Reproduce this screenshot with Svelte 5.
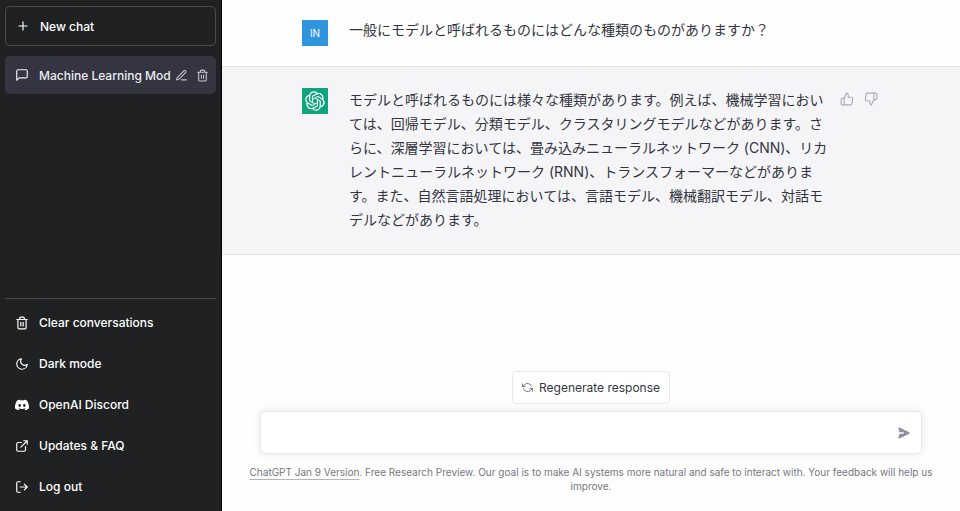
<script>
    let message = '';

    const links = [
        { icon: 'trash', label: 'Clear conversations' },
        { icon: 'moon', label: 'Dark mode' },
        { icon: 'discord', label: 'OpenAI Discord', href: '#discord' },
        { icon: 'external', label: 'Updates & FAQ', href: '#faq' },
        { icon: 'logout', label: 'Log out' }
    ];

    // Feather icon paths, 24x24 grid
    const icons = {
        plus: 'M12 5v14M5 12h14',
        chat: 'M21 15a2 2 0 0 1-2 2H7l-4 4V5a2 2 0 0 1 2-2h14a2 2 0 0 1 2 2z',
        edit: 'M12 20h9M16.5 3.5a2.121 2.121 0 0 1 3 3L7 19l-4 1 1-4L16.5 3.5z',
        trash: 'M3 6h18M19 6v14a2 2 0 0 1-2 2H7a2 2 0 0 1-2-2V6m3 0V4a2 2 0 0 1 2-2h4a2 2 0 0 1 2 2v2M10 11v6M14 11v6',
        moon: 'M21 12.79A9 9 0 1 1 11.21 3 7 7 0 0 0 21 12.79z',
        external: 'M18 13v6a2 2 0 0 1-2 2H5a2 2 0 0 1-2-2V8a2 2 0 0 1 2-2h6M15 3h6v6M10 14L21 3',
        logout: 'M9 21H5a2 2 0 0 1-2-2V5a2 2 0 0 1 2-2h4M16 17l5-5-5-5M21 12H9',
        up: 'M14 9V5a3 3 0 0 0-3-3l-4 9v11h11.28a2 2 0 0 0 2-1.7l1.38-9a2 2 0 0 0-2-2.3zM7 22H4a2 2 0 0 1-2-2v-7a2 2 0 0 1 2-2h3',
        down: 'M10 15v4a3 3 0 0 0 3 3l4-9V2H5.72a2 2 0 0 0-2 1.7l-1.38 9a2 2 0 0 0 2 2.3zm7-13h2.67A2.31 2.31 0 0 1 22 4v7a2.31 2.31 0 0 1-2.33 2H17',
        refresh: 'M1 4v6h6M23 20v-6h-6M20.49 9A9 9 0 0 0 5.64 5.64L1 10M23 14l-4.64 4.36A9 9 0 0 1 3.51 15'
    };

    const discord = 'M20.317 4.37a19.79 19.79 0 0 0-4.885-1.515.074.074 0 0 0-.079.037c-.21.375-.444.864-.608 1.25a18.27 18.27 0 0 0-5.487 0 12.64 12.64 0 0 0-.617-1.25.077.077 0 0 0-.079-.037A19.736 19.736 0 0 0 3.677 4.37a.07.07 0 0 0-.032.027C.533 9.046-.32 13.58.099 18.057a.082.082 0 0 0 .031.057 19.9 19.9 0 0 0 5.993 3.03.078.078 0 0 0 .084-.028c.462-.63.874-1.295 1.226-1.994a.076.076 0 0 0-.041-.106 13.107 13.107 0 0 1-1.872-.892.077.077 0 0 1-.008-.128c.126-.094.252-.192.372-.291a.074.074 0 0 1 .077-.01c3.928 1.793 8.18 1.793 12.062 0a.074.074 0 0 1 .078.009c.12.099.246.198.373.292a.077.077 0 0 1-.006.127 12.3 12.3 0 0 1-1.873.892.077.077 0 0 0-.041.107c.36.698.772 1.362 1.225 1.993a.076.076 0 0 0 .084.028 19.839 19.839 0 0 0 6.002-3.03.077.077 0 0 0 .032-.054c.5-5.177-.838-9.674-3.549-13.66a.061.061 0 0 0-.031-.03zM8.02 15.33c-1.183 0-2.157-1.085-2.157-2.419s.956-2.419 2.157-2.419c1.21 0 2.176 1.096 2.157 2.42 0 1.333-.956 2.418-2.157 2.418zm7.975 0c-1.183 0-2.157-1.085-2.157-2.419s.955-2.419 2.157-2.419c1.21 0 2.176 1.096 2.157 2.42 0 1.333-.946 2.418-2.157 2.418z';
</script>

{#snippet icon(name)}
    <svg class="icon" viewBox="0 0 24 24" aria-hidden="true">
        {#if name === 'discord'}
            <path class="solid" d={discord} />
        {:else}
            <path d={icons[name]} />
        {/if}
    </svg>
{/snippet}

<div class="app">
    <aside>
        <button class="new-chat">{@render icon('plus')}New chat</button>

        <div class="conversation">
            {@render icon('chat')}
            <a href="#chat">Machine Learning Mod</a>
            <div class="actions">
                <button aria-label="Rename">{@render icon('edit')}</button>
                <button aria-label="Delete">{@render icon('trash')}</button>
            </div>
        </div>

        <nav>
            {#each links as link}
                {#if link.href}
                    <a class="item" href={link.href}>{@render icon(link.icon)}{link.label}</a>
                {:else}
                    <button class="item">{@render icon(link.icon)}{link.label}</button>
                {/if}
            {/each}
        </nav>
    </aside>

    <main>
        <section class="message user">
            <div class="inner">
                <div class="avatar">IN</div>
                <p>一般にモデルと呼ばれるものにはどんな種類のものがありますか？</p>
            </div>
        </section>

        <section class="message bot">
            <div class="inner">
                <div class="avatar">
                    <svg viewBox="0 0 41 41" aria-hidden="true">
                        <path d="M37.532 16.87a9.963 9.963 0 0 0-.856-8.184 10.078 10.078 0 0 0-10.855-4.835A9.964 9.964 0 0 0 18.306.5a10.079 10.079 0 0 0-9.614 6.977 9.967 9.967 0 0 0-6.664 4.834 10.08 10.08 0 0 0 1.24 11.817 9.965 9.965 0 0 0 .856 8.185 10.079 10.079 0 0 0 10.855 4.835 9.965 9.965 0 0 0 7.516 3.35 10.078 10.078 0 0 0 9.617-6.981 9.967 9.967 0 0 0 6.663-4.834 10.079 10.079 0 0 0-1.243-11.813zM22.498 37.886a7.474 7.474 0 0 1-4.799-1.735c.061-.033.168-.091.237-.134l7.964-4.6a1.294 1.294 0 0 0 .655-1.134V19.054l3.366 1.944a.12.12 0 0 1 .066.092v9.299a7.505 7.505 0 0 1-7.49 7.496zM6.392 31.006a7.471 7.471 0 0 1-.894-5.023c.06.036.162.099.237.141l7.964 4.6a1.297 1.297 0 0 0 1.308 0l9.724-5.614v3.888a.12.12 0 0 1-.048.103l-8.051 4.649a7.504 7.504 0 0 1-10.24-2.744zM4.297 13.62A7.469 7.469 0 0 1 8.2 10.333c0 .068-.004.19-.004.274v9.201a1.294 1.294 0 0 0 .654 1.132l9.723 5.614-3.366 1.944a.12.12 0 0 1-.114.01L7.04 23.856a7.504 7.504 0 0 1-2.743-10.237zm27.658 6.437-9.724-5.615 3.367-1.943a.121.121 0 0 1 .113-.01l8.052 4.648a7.498 7.498 0 0 1-1.158 13.528v-9.476a1.293 1.293 0 0 0-.65-1.132zm3.35-5.043c-.059-.037-.162-.099-.236-.141l-7.965-4.6a1.298 1.298 0 0 0-1.308 0l-9.723 5.614v-3.888a.12.12 0 0 1 .048-.103l8.05-4.645a7.497 7.497 0 0 1 11.135 7.763zm-21.063 6.929-3.367-1.944a.12.12 0 0 1-.065-.092v-9.299a7.497 7.497 0 0 1 12.293-5.756 6.94 6.94 0 0 0-.236.134l-7.965 4.6a1.294 1.294 0 0 0-.654 1.132l-.006 11.225zm1.829-3.943 4.33-2.501 4.332 2.5v5l-4.331 2.5-4.331-2.5V18z" />
                    </svg>
                </div>
                <p>モデルと呼ばれるものには様々な種類があります。例えば、機械学習においては、回帰モデル、分類モデル、クラスタリングモデルなどがあります。さらに、深層学習においては、畳み込みニューラルネットワーク (CNN)、リカレントニューラルネットワーク (RNN)、トランスフォーマーなどがあります。また、自然言語処理においては、言語モデル、機械翻訳モデル、対話モデルなどがあります。</p>
                <div class="votes">
                    <button aria-label="Good response">{@render icon('up')}</button>
                    <button aria-label="Bad response">{@render icon('down')}</button>
                </div>
            </div>
        </section>

        <footer>
            <button class="regenerate">{@render icon('refresh')}Regenerate response</button>
            <form on:submit|preventDefault>
                <textarea rows="1" aria-label="Message" bind:value={message}></textarea>
                <button aria-label="Send">
                    <svg viewBox="0 0 20 20" aria-hidden="true">
                        <path d="M10.894 2.553a1 1 0 0 0-1.788 0l-7 14a1 1 0 0 0 1.169 1.409l5-1.429A1 1 0 0 0 9 15.571V11a1 1 0 1 1 2 0v4.571a1 1 0 0 0 .725.962l5 1.428a1 1 0 0 0 1.17-1.408l-7-14z" transform="rotate(90 10 10)" />
                    </svg>
                </button>
            </form>
            <p><a href="#release-notes">ChatGPT Jan 9 Version</a>. Free Research Preview. Our goal is to make AI systems more natural and safe to interact with. Your feedback will help us improve.</p>
        </footer>
    </main>
</div>

<style>
    :global(body) {
        margin: 0;
        font-family: Inter, "Noto Sans CJK JP", sans-serif;
    }

    .app {
        display: flex;
        min-height: 100vh;
        background: #fefefe;
    }

    button {
        padding: 0;
        border: 0;
        background: none;
        color: inherit;
        font: inherit;
        cursor: pointer;
    }

    a {
        color: inherit;
        text-decoration: none;
    }

    p {
        margin: 0;
    }

    .icon {
        flex: none;
        display: block;
        width: 14px;
        height: 14px;
        fill: none;
        stroke: currentColor;
        stroke-width: 2;
        stroke-linecap: round;
        stroke-linejoin: round;
    }

    .icon .solid {
        fill: currentColor;
        stroke: none;
    }

    /* Sidebar */
    aside {
        flex: none;
        display: flex;
        flex-direction: column;
        box-sizing: border-box;
        width: 222px;
        padding: 6px 5px 4px;
        border-right: 1px solid #000;
        background: #202123;
        color: #fff;
        font-size: 12px;
        font-weight: 500;
    }

    .new-chat,
    .conversation,
    .item {
        display: flex;
        align-items: center;
        gap: 10px;
        box-sizing: border-box;
        padding: 0 10px;
        border-radius: 5px;
        text-align: left;
    }

    .new-chat {
        height: 40px;
        border: 1px solid #4d4d4f;
    }

    .conversation {
        height: 38px;
        margin-top: 10px;
        padding-right: 7px;
        background: #343541;
        color: #ececf1;
    }

    .conversation a {
        flex: 1;
        min-width: 0;
        white-space: nowrap;
    }

    .actions {
        display: flex;
        gap: 8px;
        margin-left: -6px;
        color: #c5c5d2;
    }

    .actions .icon,
    .actions button {
        width: 13px;
        height: 13px;
    }

    nav {
        display: flex;
        flex-direction: column;
        margin-top: auto;
        padding-top: 3px;
        border-top: 1px solid #4d4d4f;
    }

    .item {
        width: 100%;
        height: 41px;
    }

    /* Messages */
    main {
        flex: 1;
        display: flex;
        flex-direction: column;
        min-width: 0;
    }

    .message {
        padding: 20px 22px 20px 20px;
        border-bottom: 1px solid #e3e3e6;
        color: #343541;
        font-size: 14px;
        line-height: 24px;
    }

    .user {
        line-height: 20px;
    }

    .bot {
        padding-top: 21px;
        padding-bottom: 22px;
        background: #f5f5f7;
    }

    .inner {
        display: flex;
        align-items: flex-start;
        max-width: 576px;
        margin: 0 auto;
    }

    .avatar {
        flex: none;
        display: flex;
        align-items: center;
        justify-content: center;
        width: 26px;
        height: 26px;
        margin-right: 21px;
        background: #2f95dc;
        color: #fff;
        font-size: 10px;
    }

    .bot .avatar {
        background: #10a37f;
    }

    .avatar svg {
        width: 20px;
        height: 20px;
        fill: currentColor;
    }

    .message p {
        flex: 1;
    }

    .votes {
        display: flex;
        gap: 10px;
        margin: 4px 0 0 12px;
        color: #acacbe;
    }

    /* Composer */
    footer {
        display: flex;
        flex-direction: column;
        align-items: center;
        margin-top: auto;
        padding: 16px 16px 18px;
    }

    .regenerate {
        display: flex;
        align-items: center;
        gap: 6px;
        box-sizing: border-box;
        height: 33px;
        padding: 0 9px;
        border: 1px solid #e8e8ec;
        border-radius: 4px;
        background: #fff;
        color: #343541;
        font-size: 12px;
    }

    .regenerate .icon {
        width: 11px;
        height: 11px;
        color: #6b6c7b;
    }

    form {
        display: flex;
        align-items: center;
        box-sizing: border-box;
        width: 100%;
        max-width: 662px;
        height: 43px;
        margin: 7px 0 11px;
        padding: 0 10px;
        border: 1px solid #e8e8ea;
        border-radius: 5px;
        background: #fff;
        box-shadow: 0 0 9px rgba(0, 0, 0, 0.1);
    }

    textarea {
        flex: 1;
        height: 20px;
        padding: 0;
        border: 0;
        outline: 0;
        resize: none;
        background: transparent;
        font: inherit;
        font-size: 14px;
        line-height: 20px;
    }

    form button svg {
        display: block;
        width: 14px;
        height: 14px;
        fill: #8e8ea0;
    }

    footer p {
        color: #777780;
        font-size: 10px;
        line-height: 14px;
        text-align: center;
    }

    footer p a {
        text-decoration: underline;
        text-decoration-color: #b4b4ba;
        text-underline-offset: 3px;
    }
</style>
